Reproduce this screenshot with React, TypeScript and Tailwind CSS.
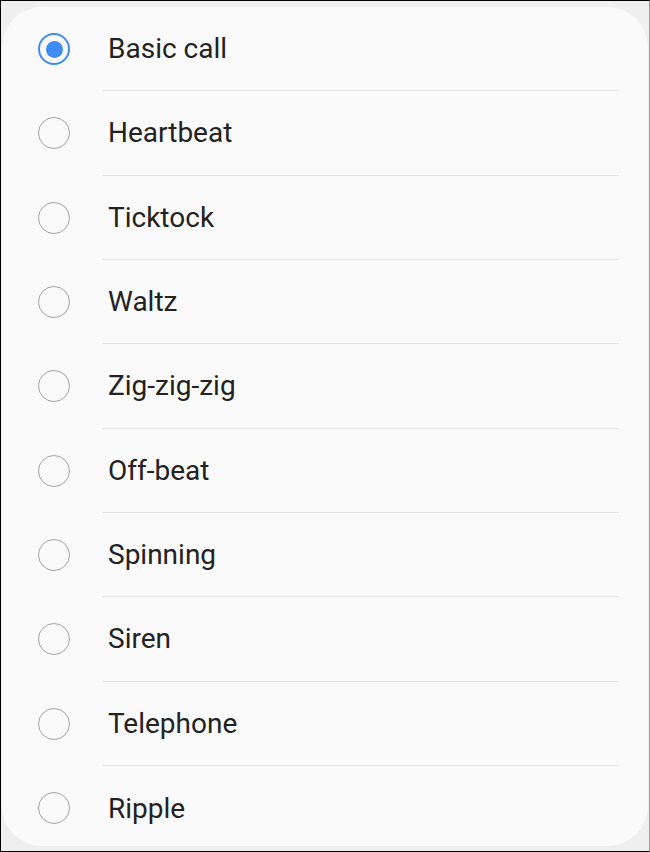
import React from "react";

const options = [
  "Basic call",
  "Heartbeat",
  "Ticktock",
  "Waltz",
  "Zig-zig-zig",
  "Off-beat",
  "Spinning",
  "Siren",
  "Telephone",
  "Ripple",
];

const Radio: React.FC<{ checked: boolean }> = ({ checked }) =>
  checked ? (
    <span className="flex h-[32px] w-[32px] items-center justify-center rounded-full border-2 border-[#3e8cf3]">
      <span className="h-[17px] w-[17px] rounded-full bg-[#3e8cf3]" />
    </span>
  ) : (
    <span className="h-[32px] w-[32px] rounded-full border-[1.5px] border-[#a3a3a3]" />
  );

export default function App() {
  const selected = 0;
  return (
    <div className="h-[852px] w-[650px] overflow-hidden border-y border-l border-black border-r border-r-[#9a9a9a] bg-[#efefef] pl-[1px] pr-[1px] pt-[6px] font-['Roboto',sans-serif]">
      <div className="h-[839px] overflow-hidden rounded-[40px] bg-[#fafafa]">
        {options.map((name, i) => (
          <div key={name} className="flex h-[84.33px] items-stretch pl-[36px]">
            <div className="flex items-center">
              <Radio checked={i === selected} />
            </div>
            <div
              className={`ml-[32px] mr-[29px] flex flex-1 items-center pl-[6px] text-[28px] text-[#222] ${
                i < options.length - 1 ? "border-b-[1.5px] border-[#e3e3e3]" : ""
              }`}
            >
              <span className="pt-[1px]">{name}</span>
            </div>
          </div>
        ))}
      </div>
    </div>
  );
}
